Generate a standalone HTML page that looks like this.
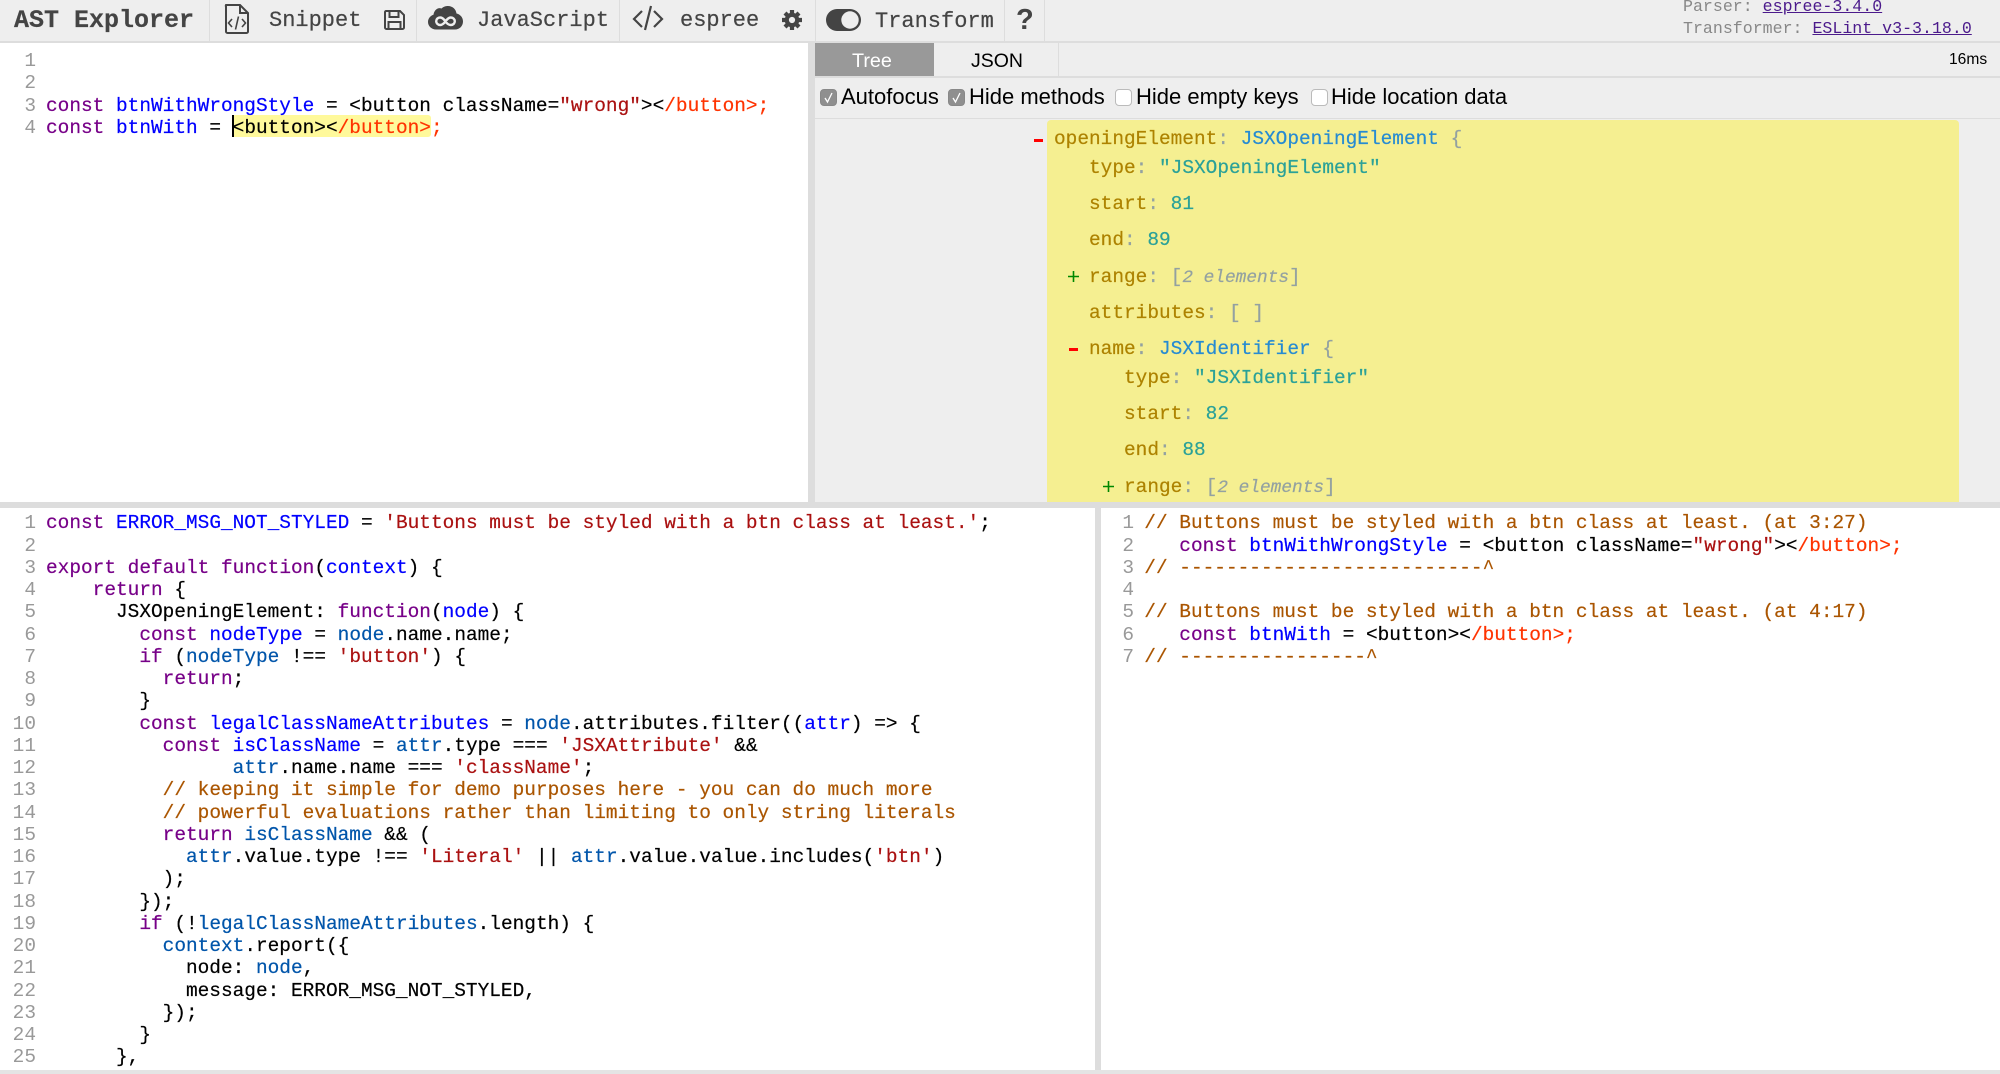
<!DOCTYPE html>
<html><head><meta charset="utf-8"><title>AST Explorer</title>
<style>
html,body{margin:0;padding:0;width:2000px;height:1074px;overflow:hidden;background:#eee}
*{box-sizing:border-box}
.a{position:absolute}
.m{font-family:"Liberation Mono",monospace}
.s{font-family:"Liberation Sans",sans-serif}
.t{position:absolute;font-family:"Liberation Mono",monospace;font-size:22px;color:#444;line-height:26px;white-space:pre;top:8px;-webkit-text-stroke:.2px}
.sep{position:absolute;top:0;width:1px;height:41px;background:#ddd}
pre{margin:0;font-family:"Liberation Mono",monospace;font-size:19.44px;line-height:22.25px;position:absolute;color:#000;-webkit-text-stroke:.2px}
.g{color:#999;text-align:right;width:40px;left:-4px;-webkit-text-stroke:0}
.k{color:#708}.d{color:#00f}.v{color:#05a}.st{color:#a11}.c{color:#a50}.e{color:#f30}
.r{position:absolute;font-family:"Liberation Mono",monospace;font-size:19.44px;line-height:22px;white-space:pre;color:#93a1a1;-webkit-text-stroke:.2px}
.key{color:#ad8200}.str{color:#2aa198}.ty{color:#268bd2}.i{font-style:italic;color:#93a1a1;font-size:17.8px}
.cb{position:absolute;top:89px;width:17px;height:17px;border-radius:4px;border:1px solid #bbb;background:#fff}
.cb.on{background:#8f8f8f;border-color:#888}
.cb svg{position:absolute;left:1px;top:1px}
.o{position:absolute;top:84px;font-family:"Liberation Sans",sans-serif;font-size:22px;line-height:26px;color:#000;white-space:pre}
</style></head><body>
<div class="a" style="left:0;top:0;width:2000px;height:41px;background:#eee"></div>
<div class="a" style="left:0;top:41px;width:2000px;height:2px;background:#ddd"></div>
<div class="t" style="left:14px;top:8px;font-size:25px;font-weight:bold">AST Explorer</div>
<div class="sep" style="left:209px"></div>
<svg class="a" style="left:224px;top:4px" width="26" height="30" viewBox="0 0 26 30" fill="none" stroke="#444" stroke-width="2"><path d="M2 1h14l8 8v18.500a1.500 1.500 0 0 1-1.500 1.500h-19a1.500 1.500 0 0 1-1.500-1.500V2.500A1.500 1.500 0 0 1 2 1z"/><path d="M16 1v8h8"/><path d="M8 15l-3.500 4 3.500 4M18 15l3.500 4-3.500 4M14.500 12.500l-3 13" stroke-width="1.600"/></svg>
<div class="t" style="left:269px">Snippet</div>
<svg class="a" style="left:384px;top:10px" width="21" height="20" viewBox="0 0 21 20" fill="none" stroke="#444" stroke-width="2"><path d="M2 1h14l4 4v12.500a1.500 1.500 0 0 1-1.500 1.500h-16A1.500 1.500 0 0 1 1 17.500v-15A1.500 1.500 0 0 1 2 1z"/><path d="M5.500 1v6h9V1M4.500 19v-7h12v7"/></svg>
<div class="sep" style="left:416px"></div>
<svg class="a" style="left:428px;top:6px" width="35" height="24" viewBox="0 0 35 24"><path fill="#444" d="M8 23.500C3.500 23.500 0 20 0 16c0-3.500 2.500-6.300 5.500-7.200C6 4 10 1 13.500 2.500 15.500.5 18 0 20 0c4.500 0 8 3.300 8.500 7.500 3.700.8 6.500 4 6.500 8 0 4.500-3.500 8-8 8z"/><path fill="none" stroke="#eee" stroke-width="2.400" d="M17.500 15.500c-2 2.500-3.500 3.500-5.300 3.500-2.300 0-4-1.700-4-3.800s1.700-3.700 4-3.700c1.800 0 3.300 1 5.300 4 2 3 3.500 3.500 5.300 3.500 2.300 0 4-1.600 4-3.700s-1.700-3.800-4-3.800c-1.800 0-3.300 1-5.300 4z"/></svg>
<div class="t" style="left:477px">JavaScript</div>
<div class="sep" style="left:619px"></div>
<svg class="a" style="left:632px;top:4px" width="32" height="28" viewBox="0 0 32 28" fill="none" stroke="#444" stroke-width="2.200"><path d="M10 7L2 15l8 8M22 7l8 8-8 8M19 2l-6 24"/></svg>
<div class="t" style="left:680px">espree</div>
<svg class="a" style="left:782px;top:10px" width="20" height="20" viewBox="0 0 20 20"><g stroke="#444" stroke-width="4.200"><path d="M10 0v20M0 10h20M3 3l14 14M17 3L3 17"/></g><circle cx="10" cy="10" r="7.300" fill="#444"/><circle cx="10" cy="10" r="3.100" fill="#eee"/></svg>
<div class="sep" style="left:815px"></div>
<svg class="a" style="left:826px;top:9px" width="35" height="22" viewBox="0 0 35 22"><rect width="35" height="22" rx="11" fill="#444"/><circle cx="24" cy="11" r="8.700" fill="#eee"/></svg>
<div class="t" style="left:875px;top:9px">Transform</div>
<div class="sep" style="left:1004px"></div>
<div class="a s" style="left:1016px;top:2px;font-size:29px;line-height:36px;font-weight:bold;color:#444">?</div>
<div class="sep" style="left:1044px"></div>
<div class="a m" style="left:1683px;top:-3px;font-size:16.6px;line-height:20px;color:#888;white-space:pre">Parser: <span style="color:#4b1a8b;text-decoration:underline">espree-3.4.0</span></div>
<div class="a m" style="left:1683px;top:19px;font-size:16.6px;line-height:20px;color:#888;white-space:pre">Transformer: <span style="color:#4b1a8b;text-decoration:underline">ESLint v3-3.18.0</span></div>

<!-- top left editor -->
<div class="a" style="left:0;top:43px;width:808px;height:459px;background:#fff"></div>
<div class="a" style="left:808px;top:43px;width:7px;height:459px;background:#ddd"></div>
<div class="a" style="left:232px;top:115px;width:199px;height:22px;background:#fff99b;border-radius:3px"></div>
<div class="a" style="left:232px;top:115px;width:1.500px;height:22px;background:#000"></div>
<pre class="g" style="top:50px">1
2
3
4</pre>
<pre style="left:46px;top:50px">


<span class="k">const</span> <span class="d">btnWithWrongStyle</span> = &lt;button className=<span class="st">"wrong"</span>&gt;&lt;<span class="e">/button&gt;;</span>
<span class="k">const</span> <span class="d">btnWith</span> = &lt;button&gt;&lt;<span class="e">/button&gt;;</span></pre>

<!-- right top -->
<div class="a" style="left:815px;top:43px;width:119px;height:33px;background:#999"></div>
<div class="a s" style="left:852px;top:48px;font-size:19.8px;line-height:26px;color:#fff">Tree</div>
<div class="a s" style="left:971px;top:48px;font-size:19.5px;line-height:26px;color:#000">JSON</div>
<div class="a" style="left:1058px;top:43px;width:1px;height:33px;background:#ddd"></div>
<div class="a s" style="left:1949px;top:50px;font-size:15.6px;line-height:20px;color:#000">16ms</div>
<div class="a" style="left:815px;top:76px;width:1185px;height:2px;background:#ddd"></div>
<div class="a" style="left:815px;top:118px;width:1185px;height:1px;background:#ddd"></div>
<div class="cb on" style="left:820px"><svg width="13" height="13" viewBox="0 0 13 13" fill="none" stroke="#fff" stroke-width="1.300"><path d="M3 7l2.500 4L10 2"/></svg></div>
<div class="o" style="left:841px">Autofocus</div>
<div class="cb on" style="left:948px"><svg width="13" height="13" viewBox="0 0 13 13" fill="none" stroke="#fff" stroke-width="1.300"><path d="M3 7l2.500 4L10 2"/></svg></div>
<div class="o" style="left:969px">Hide methods</div>
<div class="cb" style="left:1115px"></div>
<div class="o" style="left:1136px">Hide empty keys</div>
<div class="cb" style="left:1311px"></div>
<div class="o" style="left:1331px">Hide location data</div>

<div class="a" style="left:1047px;top:120px;width:912px;height:382px;background:#f5ef91;border-radius:4px 4px 0 0"></div>
<div class="a" style="left:1034px;top:139px;width:9px;height:2.500px;background:#f00"></div>
<div class="r" style="left:1054px;top:128px"><span class="key">openingElement</span>: <span class="ty">JSXOpeningElement</span> {</div>
<div class="r" style="left:1089px;top:157px"><span class="key">type</span>: <span class="str">"JSXOpeningElement"</span></div>
<div class="r" style="left:1089px;top:193px"><span class="key">start</span>: <span class="str">81</span></div>
<div class="r" style="left:1089px;top:229px"><span class="key">end</span>: <span class="str">89</span></div>
<svg class="a" style="left:1068px;top:271px" width="11" height="11"><path d="M0 5.500h11M5.500 0v11" stroke="#080" stroke-width="1.600"/></svg>
<div class="r" style="left:1089px;top:266px"><span class="key">range</span>: [<span class="i">2 elements</span>]</div>
<div class="r" style="left:1089px;top:302px"><span class="key">attributes</span>: [ ]</div>
<div class="a" style="left:1069px;top:348px;width:9px;height:2.500px;background:#f00"></div>
<div class="r" style="left:1089px;top:338px"><span class="key">name</span>: <span class="ty">JSXIdentifier</span> {</div>
<div class="r" style="left:1124px;top:367px"><span class="key">type</span>: <span class="str">"JSXIdentifier"</span></div>
<div class="r" style="left:1124px;top:403px"><span class="key">start</span>: <span class="str">82</span></div>
<div class="r" style="left:1124px;top:439px"><span class="key">end</span>: <span class="str">88</span></div>
<svg class="a" style="left:1103px;top:481px" width="11" height="11"><path d="M0 5.500h11M5.500 0v11" stroke="#080" stroke-width="1.600"/></svg>
<div class="r" style="left:1124px;top:476px"><span class="key">range</span>: [<span class="i">2 elements</span>]</div>

<!-- divider -->
<div class="a" style="left:0;top:502px;width:2000px;height:6px;background:#ddd"></div>
<!-- bottom panes -->
<div class="a" style="left:0;top:508px;width:1095px;height:562px;background:#fff;overflow:hidden">
<pre class="g" style="top:4.400px">1
2
3
4
5
6
7
8
9
10
11
12
13
14
15
16
17
18
19
20
21
22
23
24
25</pre>
<pre style="left:46px;top:4.400px"><span class="k">const</span> <span class="d">ERROR_MSG_NOT_STYLED</span> = <span class="st">'Buttons must be styled with a btn class at least.'</span>;

<span class="k">export</span> <span class="k">default</span> <span class="k">function</span>(<span class="d">context</span>) {
    <span class="k">return</span> {
      JSXOpeningElement: <span class="k">function</span>(<span class="d">node</span>) {
        <span class="k">const</span> <span class="d">nodeType</span> = <span class="v">node</span>.name.name;
        <span class="k">if</span> (<span class="v">nodeType</span> !== <span class="st">'button'</span>) {
          <span class="k">return</span>;
        }
        <span class="k">const</span> <span class="d">legalClassNameAttributes</span> = <span class="v">node</span>.attributes.filter((<span class="d">attr</span>) =&gt; {
          <span class="k">const</span> <span class="d">isClassName</span> = <span class="v">attr</span>.type === <span class="st">'JSXAttribute'</span> &amp;&amp;
                <span class="v">attr</span>.name.name === <span class="st">'className'</span>;
          <span class="c">// keeping it simple for demo purposes here - you can do much more</span>
          <span class="c">// powerful evaluations rather than limiting to only string literals</span>
          <span class="k">return</span> <span class="v">isClassName</span> &amp;&amp; (
            <span class="v">attr</span>.value.type !== <span class="st">'Literal'</span> || <span class="v">attr</span>.value.value.includes(<span class="st">'btn'</span>)
          );
        });
        <span class="k">if</span> (!<span class="v">legalClassNameAttributes</span>.length) {
          <span class="v">context</span>.report({
            node: <span class="v">node</span>,
            message: ERROR_MSG_NOT_STYLED,
          });
        }
      },</pre>
</div>
<div class="a" style="left:1095px;top:508px;width:6px;height:562px;background:#ddd"></div>
<div class="a" style="left:1101px;top:508px;width:899px;height:562px;background:#fff;overflow:hidden">
<pre class="g" style="top:4.400px;left:-7px">1
2
3
4
5
6
7</pre>
<pre style="left:43.3px;top:4.400px"><span class="c">// Buttons must be styled with a btn class at least. (at 3:27)</span>
   <span class="k">const</span> <span class="d">btnWithWrongStyle</span> = &lt;button className=<span class="st">"wrong"</span>&gt;&lt;<span class="e">/button&gt;;</span>
<span class="c">// --------------------------^</span>

<span class="c">// Buttons must be styled with a btn class at least. (at 4:17)</span>
   <span class="k">const</span> <span class="d">btnWith</span> = &lt;button&gt;&lt;<span class="e">/button&gt;;</span>
<span class="c">// ----------------^</span></pre>
</div>
<div class="a" style="left:0;top:1070px;width:2000px;height:4px;background:#e4e4e4"></div>
</body></html>
